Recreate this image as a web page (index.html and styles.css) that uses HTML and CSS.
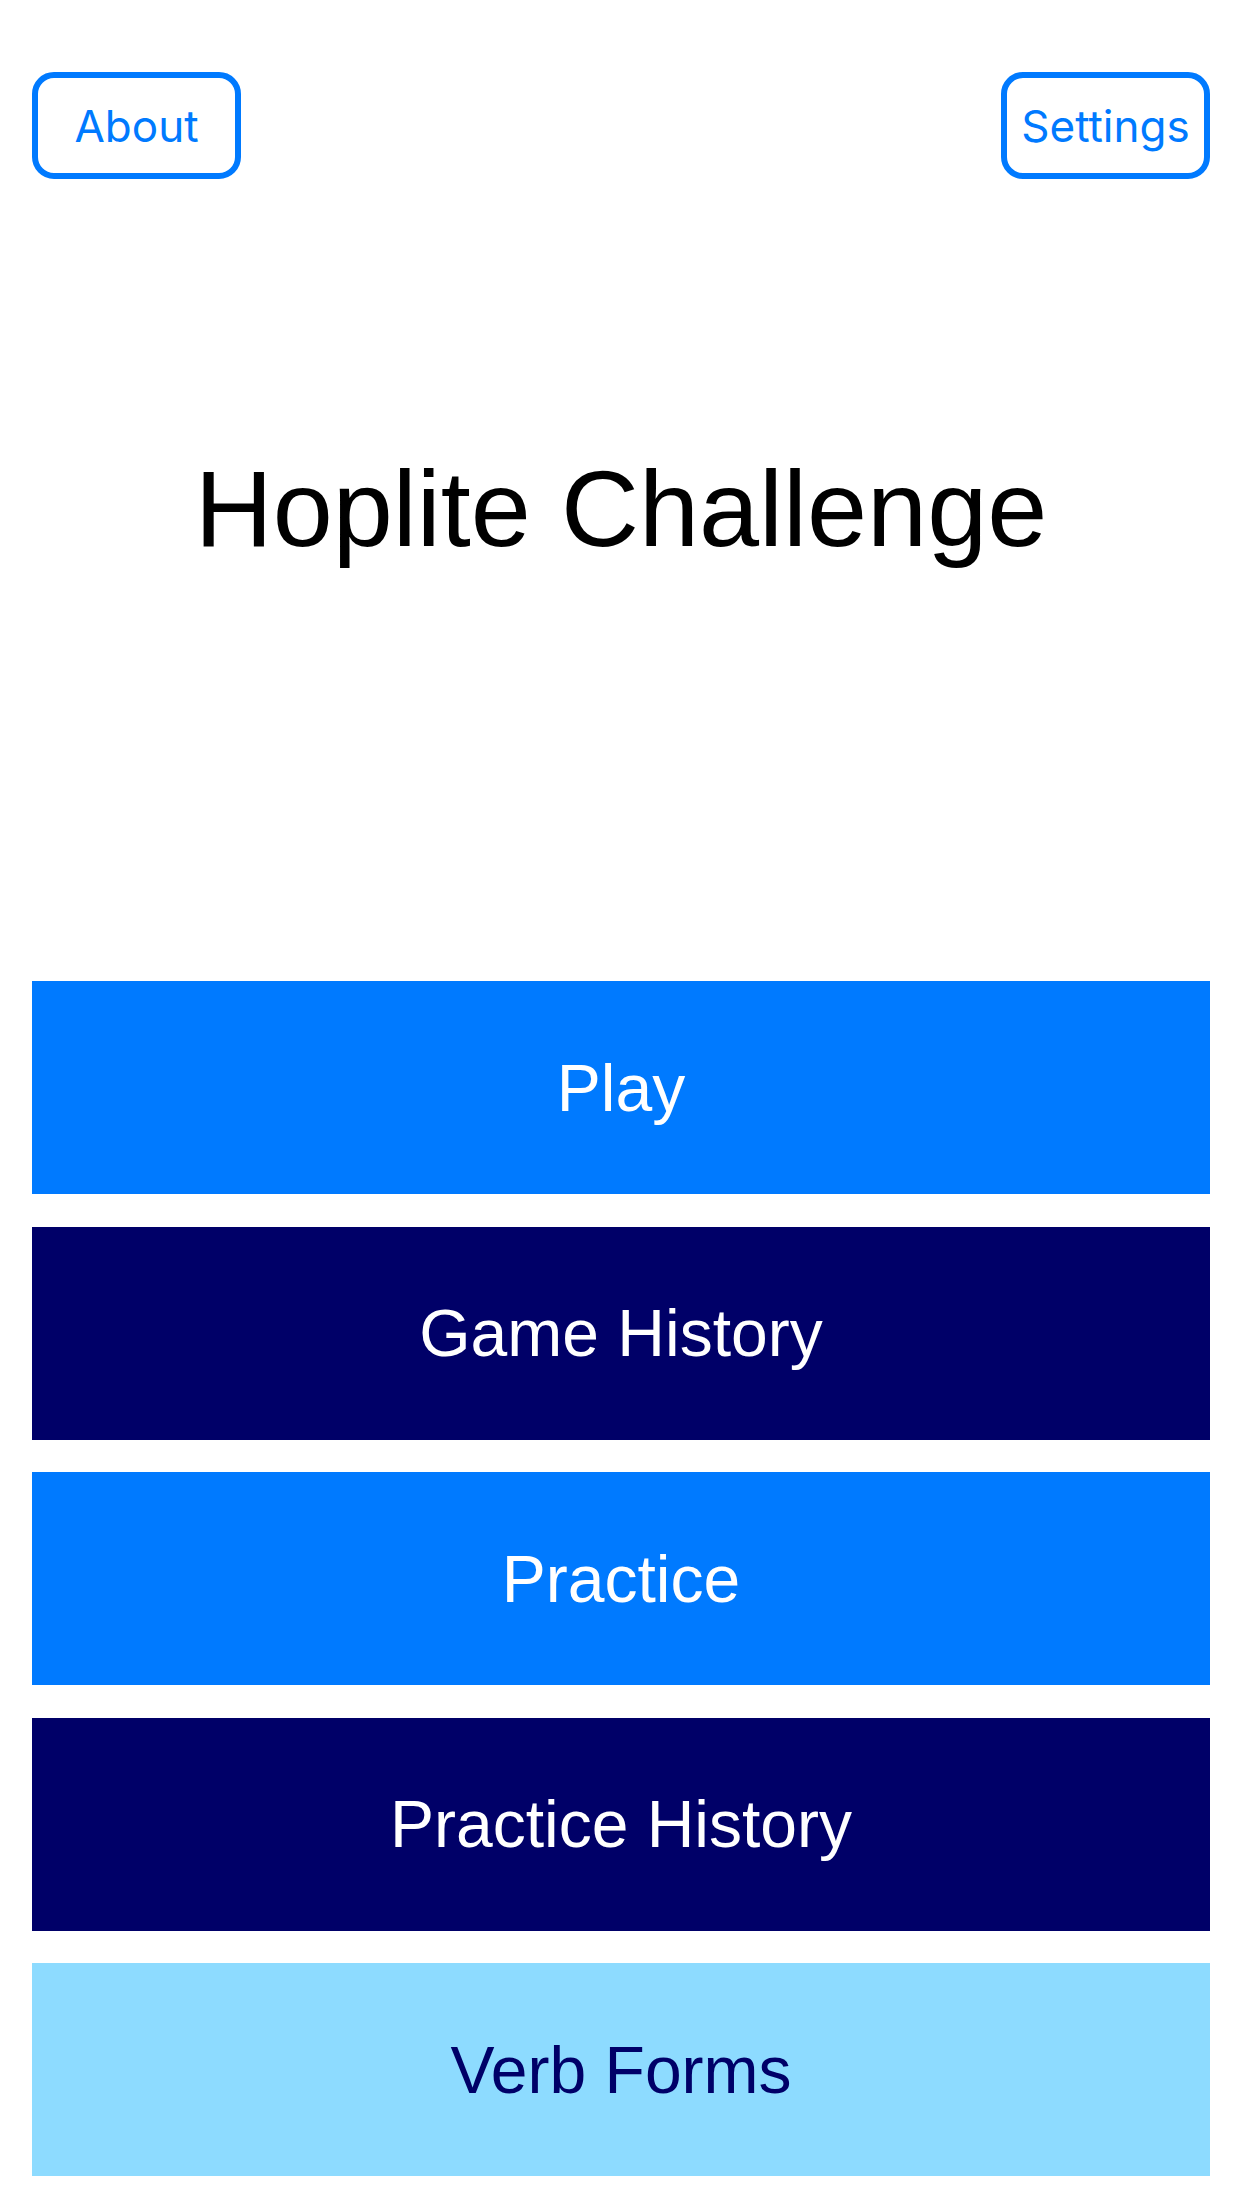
FILE: index.html
```html
<!DOCTYPE html>
<html>
<head>
<meta charset="utf-8">
<link rel="stylesheet" href="styles.css">
</head>
<body>
<div class="screen">
  <header class="topbar">
    <button class="nav-btn">About</button>
    <button class="nav-btn">Settings</button>
  </header>
  <h1 class="title">Hoplite Challenge</h1>
  <nav class="menu">
    <button class="menu-btn primary">Play</button>
    <button class="menu-btn dark">Game History</button>
    <button class="menu-btn primary">Practice</button>
    <button class="menu-btn dark">Practice History</button>
    <button class="menu-btn light">Verb Forms</button>
  </nav>
</div>
</body>
</html>
```

FILE: styles.css
```css
html, body {
  margin: 0;
  padding: 0;
  background: #ffffff;
}

.screen {
  width: 1242px;
  height: 2208px;
  box-sizing: border-box;
  padding: 72px 32px 0 32px;
  display: flex;
  flex-direction: column;
}

.topbar {
  display: flex;
  justify-content: space-between;
  align-items: center;
}

.nav-btn {
  width: 209px;
  height: 107px;
  box-sizing: border-box;
  border: 6px solid #007aff;
  border-radius: 22px;
  background: #ffffff;
  color: #007aff;
  font-family: Inter, "Open Sans", sans-serif;
  font-size: 44px;
  font-weight: 400;
  padding: 0;
  display: flex;
  align-items: center;
  justify-content: center;
}

.title {
  margin: 276px 0 0 0;
  font-family: "Liberation Sans", Arial, sans-serif;
  font-weight: 400;
  font-size: 108px;
  line-height: 108px;
  text-align: center;
  color: #000000;
}

.menu {
  margin-top: 418px;
  display: flex;
  flex-direction: column;
  gap: 32.5px;
}

.menu-btn {
  height: 213px;
  border: none;
  padding: 0;
  margin: 0;
  font-family: "Liberation Sans", Arial, sans-serif;
  font-size: 66px;
  font-weight: 400;
  display: flex;
  align-items: center;
  justify-content: center;
}

.primary {
  background: #007aff;
  color: #ffffff;
}

.dark {
  background: #000068;
  color: #ffffff;
}

.light {
  background: #8ddbff;
  color: #000068;
}
```
